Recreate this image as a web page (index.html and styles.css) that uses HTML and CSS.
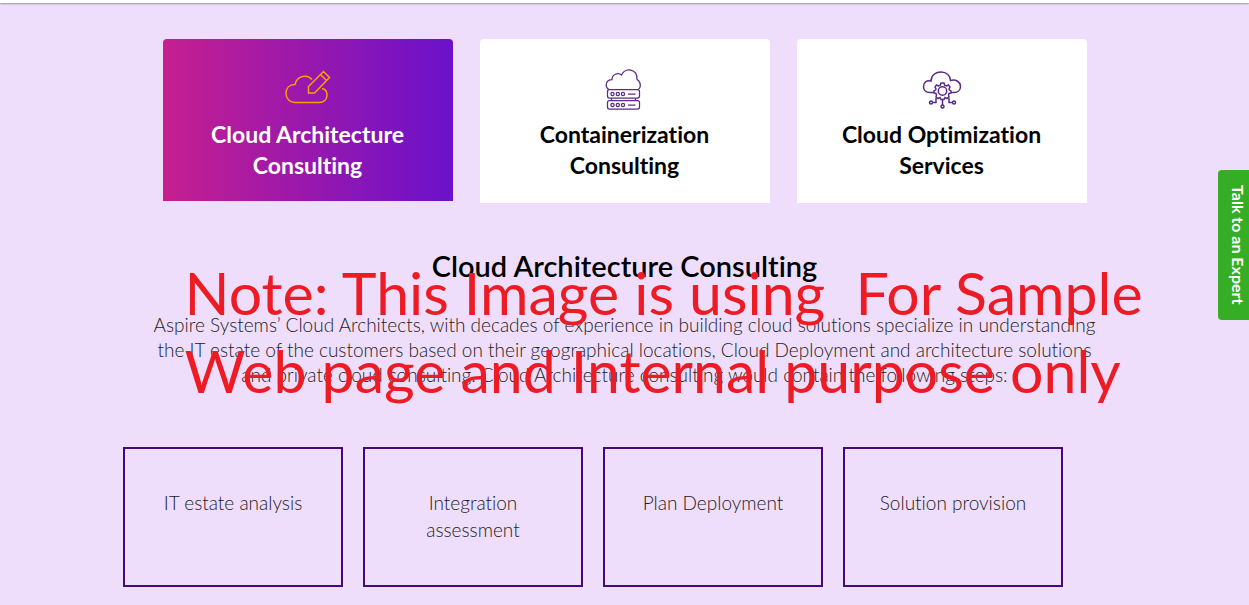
FILE: index.html
```html
<!DOCTYPE html>
<html lang="en">
<head>
<meta charset="utf-8">
<meta name="viewport" content="width=device-width, initial-scale=1">
<title>Cloud Architecture Consulting</title>
<link rel="stylesheet" href="styles.css">
</head>
<body>
<header class="topbar"></header>
<main class="services">
  <div class="tabs" role="tablist">
    <button class="tab tab-active" type="button" role="tab" aria-selected="true">
      <svg class="tab-icon" width="48" height="44" viewBox="0 0 48 44" fill="none" stroke="currentColor" stroke-width="1.5" stroke-linejoin="miter" aria-hidden="true">
        <path d="M28 12.500C23 6.500 13 9 11 17.500C5.500 17.500 2 21 2 26.500C2 32 6 35.500 11 35.500H35C40 35.500 43 32.500 43 28C43 24.500 41 22 38 21.500"/>
        <path d="M24.500 26V19.500L39.500 4.500L45.500 10.500L30.500 26ZM36.500 7.500L42.500 13.500"/>
      </svg>
      <span>Cloud Architecture<br>Consulting</span>
    </button>
    <button class="tab" type="button" role="tab" aria-selected="false">
      <svg class="tab-icon" width="48" height="44" viewBox="0 0 48 44" fill="none" stroke="currentColor" stroke-width="1.250" aria-hidden="true">
        <path d="M8 22.500C3.500 20 4.500 12.500 11 12.500C11 7.500 17 5 20.500 8C24 0 36.500 1.500 36 12.500C40.500 15 40 21 37 22.500"/>
        <rect x="6.500" y="22.500" width="32" height="8.500" rx="2"/>
        <rect x="6.500" y="33.500" width="32" height="8.500" rx="2"/>
        <path d="M10.500 31V33.500M34.500 31V33.500M27 27H34.500M27 38H34.500"/>
        <circle cx="11.500" cy="27" r="1.600"/><circle cx="16.800" cy="27" r="1.600"/><circle cx="22" cy="27" r="1.600"/>
        <circle cx="11.500" cy="38" r="1.600"/><circle cx="16.800" cy="38" r="1.600"/><circle cx="22" cy="38" r="1.600"/>
      </svg>
      <span>Containerization<br>Consulting</span>
    </button>
    <button class="tab" type="button" role="tab" aria-selected="false">
      <svg class="tab-icon" width="48" height="44" viewBox="0 -1 48 44" fill="none" stroke="currentColor" stroke-width="1.500" aria-hidden="true">
        <path d="M16 24.500H12C7 24.500 5.500 21 5.500 18.500C5.500 14.500 8.500 12 13 13C13 7 18 4 23 4C28.500 4 32 7.500 32.500 12.500C38 11 42.500 14 42.500 18.500C42.500 22 40 24.500 36 24.500H33"/>
        <circle cx="24.500" cy="23" r="4.200"/>
        <path d="M23 15H26L26.700 17.300L28.500 18L30.500 17L32 19L31 21L31.500 22L33 23V25L31 25.500L30.500 27L31 29L29 30.500L27 29.500L26 31.500H23L22 29.500L20 30.500L18 29L18.500 27L18 25.500L16 25V23L17.500 22L18 21L17 19L18.500 17L20.500 18L22.300 17.300Z"/>
        <path d="M24.500 31.500V37M18 30V34.500H14.500M31 30V34.500H34.500"/>
        <circle cx="24.500" cy="38.500" r="1.500"/><circle cx="13" cy="34.500" r="1.500"/><circle cx="36" cy="34.500" r="1.500"/>
      </svg>
      <span>Cloud Optimization<br>Services</span>
    </button>
  </div>

  <section class="detail">
    <h2 class="detail-title">Cloud Architecture Consulting</h2>
    <p class="detail-text">Aspire Systems’ Cloud Architects, with decades of experience in building cloud solutions specialize in understanding<br>
    the IT estate of the customers based on their geographical locations, Cloud Deployment and architecture solutions<br>
    and private cloud consulting. Cloud Architecture consulting would contain the following steps:</p>
    <p class="note">Note: This Image is using&nbsp; For Sample<br>Web page and Internal purpose only</p>
  </section>

  <ul class="steps">
    <li class="step">IT estate analysis</li>
    <li class="step">Integration assessment</li>
    <li class="step">Plan Deployment</li>
    <li class="step">Solution provision</li>
  </ul>
</main>
<button class="expert" type="button">Talk to an Expert</button>
</body>
</html>
```
FILE: styles.css
```css
* {
  box-sizing: border-box;
}

body {
  margin: 0;
  background: #efdefb;
  color: #222;
  font-family: Lato, "Open Sans", sans-serif;
  font-variant-ligatures: none;
}

.topbar {
  height: 3px;
  background: #fff;
  box-shadow: 0 1px 2px #999;
}

.services {
  padding: 36px 16px 18px;
}

.tabs {
  display: flex;
  justify-content: center;
  align-items: flex-start;
  gap: 27px;
}

.tab {
  display: flex;
  flex-direction: column;
  align-items: center;
  gap: 8px;
  width: 290px;
  padding: 28px 16px 22px;
  border: 0;
  border-radius: 4px 4px 0 0;
  background: #fff;
  color: #000;
  font: 700 23px/31px Lato, sans-serif;
  font-variant-ligatures: none;
  cursor: pointer;
}

.tab-icon {
  color: #5b2b86;
}

.tab-active {
  padding-bottom: 20px;
  background: linear-gradient(90deg, #c61f8f, #6a11cb);
  color: #fff;
}

.tab-active .tab-icon {
  color: #ff9d00;
}

.detail {
  position: relative;
  padding-top: 45px;
  text-align: center;
}

.detail-title {
  margin: 0 0 28px;
  color: #000;
  font: 600 29px/36px Lato, sans-serif;
  font-variant-ligatures: none;
}

.detail-text {
  margin: 0;
  font-size: 19px;
  font-weight: 300;
  line-height: 25px;
}

.note {
  position: absolute;
  top: 51px;
  left: 50%;
  margin: 0 0 0 -440px;
  color: #ed1c24;
  font-size: 59px;
  line-height: 78px;
  text-align: left;
  white-space: nowrap;
}

.steps {
  display: grid;
  grid-template-columns: repeat(4, 220px);
  gap: 20px;
  max-width: 1003px;
  margin: 60px auto 0;
  padding: 0;
  list-style: none;
}

.step {
  min-height: 140px;
  padding: 40px 32px;
  border: 2px solid #430b72;
  font-size: 19px;
  font-weight: 300;
  line-height: 27px;
  text-align: center;
}

.expert {
  position: fixed;
  top: 170px;
  right: 0;
  width: 31px;
  height: 150px;
  padding: 0 0 0 8px;
  border: 0;
  border-radius: 4px 0 0 4px;
  background: #35ae25;
  color: #fff;
  font: 700 16px/20px Lato, sans-serif;
  writing-mode: vertical-rl;
  cursor: pointer;
}
```
